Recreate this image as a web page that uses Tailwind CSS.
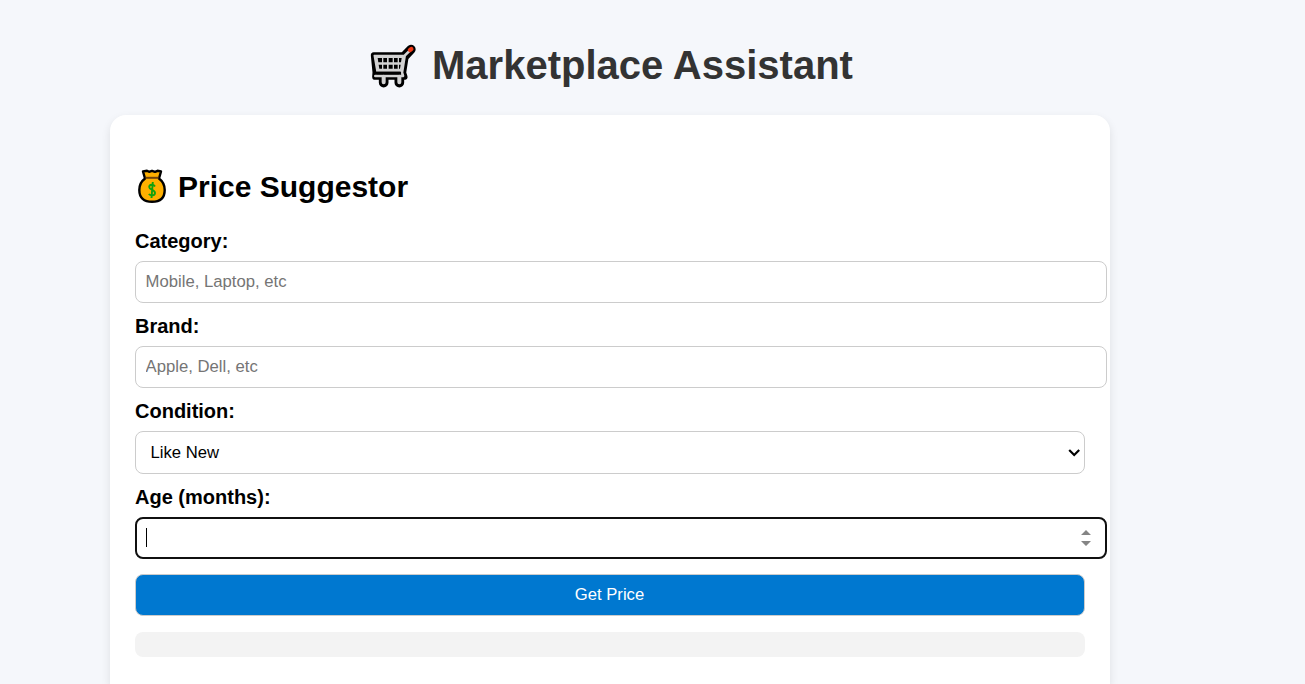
<!DOCTYPE html>
<html lang="en">
<head>
<meta charset="utf-8">
<title>Marketplace Assistant</title>
<script src="https://cdn.jsdelivr.net/npm/@tailwindcss/browser@4"></script>
</head>
<body class="h-screen overflow-hidden bg-[#f5f7fb] font-['Liberation_Sans',Arial,sans-serif] text-black">
<main class="ml-[110px] w-[1000px]">
  <h1 class="flex h-[115px] items-start pl-[260px] pt-[42px] text-[40px] leading-[46px] font-bold text-[#333]">
    <svg class="mr-[16px] h-[46px] w-[46px] shrink-0" viewBox="30 21 138 138" fill="none" stroke-linecap="round" stroke-linejoin="round">
      <g stroke="#000" fill="#000">
        <path d="M42 61H130L137 62L129 113L133 125H46L47 112Z" stroke-width="19"/>
        <path d="M153 43L137 60" stroke-width="28"/>
        <path d="M71 130V143M118 130V143" stroke-width="29"/>
      </g>
      <path d="M43 62H130L122 108H51Z" fill="#d2d2d2" stroke="#d2d2d2" stroke-width="5"/>
      <path d="M150 46L134 62L126 113L129 123H46" stroke="#d2d2d2" stroke-width="8"/>
      <path d="M71 125V142M118 125V142" stroke="#d2d2d2" stroke-width="12"/>
      <path d="M53 69H66V82H55ZM70 69H81V82H70ZM86 69H98V82H86ZM102 69H113V82H102ZM117 69H125L123 82H117ZM56 89H66V101H58ZM70 89H81V101H70ZM86 89H98V101H86ZM102 89H113V101H102ZM117 89H122L120 101H117Z" fill="#000"/>
      <path d="M51 114H120" stroke="#000" stroke-width="7"/>
      <path d="M150 45L154 42" stroke="#f03a17" stroke-width="13"/>
    </svg>
    <span>Marketplace Assistant</span>
  </h1>
  <section class="h-[569px] rounded-t-[16px] bg-white px-[25px] pt-[53px] shadow-[0_4px_10px_rgba(0,0,0,0.1)]">
    <h2 class="flex h-[61px] items-start text-[30px] leading-[36px] font-bold">
      <svg class="ml-[2px] mr-[11px] h-[36px] w-[30px] shrink-0" viewBox="0 0 30 36">
        <path d="M6 3.500L10 2.800L12 3.800L15 2.800L18 3.800L20.500 2.800L24 3.500L22 10.500C26 13.500 27.700 17 27.700 22C27.700 30 23 33.800 15 33.800S2.300 30 2.300 22C2.300 17 4 13.500 8 10.500Z" fill="#ffb000" stroke="#000" stroke-width="2.400" stroke-linejoin="round"/>
        <path d="M8.500 9.800H21.500" stroke="#70430c" stroke-width="2"/>
        <path d="M18 18.500C16.500 16 12.200 16 12.200 19C12.200 22 18 21.500 18 25C18 28 13.500 28 11.800 26M15.800 14L14.500 30" fill="none" stroke="#13a10e" stroke-width="1.900"/>
      </svg>
      <span class="pt-px">Price Suggestor</span>
    </h2>
    <label for="category" class="flex h-[32px] items-start pt-px text-[20px] leading-[23px] font-bold">Category:</label>
    <input id="category" placeholder="Mobile, Laptop, etc" class="block h-[42px] w-[972px] rounded-[8px] border border-[#ccc] bg-white px-[9.500px] text-[16.700px] outline-none placeholder:text-[#757575]">
    <label for="brand" class="flex h-[43px] items-start pt-[12px] text-[20px] leading-[23px] font-bold">Brand:</label>
    <input id="brand" placeholder="Apple, Dell, etc" class="block h-[42px] w-[972px] rounded-[8px] border border-[#ccc] bg-white px-[9.500px] text-[16.700px] outline-none placeholder:text-[#757575]">
    <label class="flex h-[43px] items-start pt-[12px] text-[20px] leading-[23px] font-bold">Condition:</label>
    <div class="flex h-[43px] w-[950px] items-center justify-between rounded-[8px] border border-[#ccc] bg-white pl-[14.500px] pr-[4px] text-[16.670px]">
      <span>Like New</span>
      <svg class="h-[12px] w-[12px]" viewBox="0 0 12 12" fill="none" stroke="#000" stroke-width="2.200"><path d="M1.200 3L6.200 8L11.200 3"/></svg>
    </div>
    <label class="flex h-[43px] items-start pt-[12px] text-[20px] leading-[23px] font-bold">Age (months):</label>
    <div class="flex h-[42px] w-[972px] items-center justify-between rounded-[8px] border-2 border-[#101010] bg-white pl-[9px] pr-[14px]">
      <span class="mb-px h-[19px] w-px bg-black"></span>
      <svg class="h-[18px] w-[10px]" viewBox="0 0 10 18" fill="#858585"><path d="M0 6L5 1L10 6ZM0 12H10L5 17Z"/></svg>
    </div>
    <button class="mt-[15px] block h-[42px] w-[950px] rounded-[8px] border border-[#ccc] bg-[#0078d0] pr-px pb-[2px] text-[16.670px] text-white">Get Price</button>
    <div class="mt-[16px] h-[25px] w-[950px] rounded-[8px] bg-[#f3f3f3]"></div>
  </section>
</main>
</body>
</html>
